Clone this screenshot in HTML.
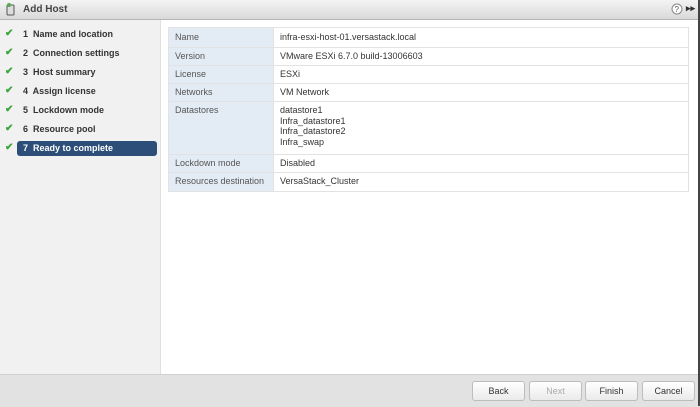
<!DOCTYPE html>
<html><head><style>
body{margin:0;width:700px;height:406px;overflow:hidden;font-family:"Liberation Sans",sans-serif;font-size:9px;color:#333;background:#fff;position:relative}
.title{position:absolute;left:0;top:0;width:700px;height:19px;background:linear-gradient(#f4f4f4,#d9d9d9);border-bottom:1px solid #b5b5b5}
.title span{position:absolute;left:23px;top:4px;font-size:10px;font-weight:bold;color:#444}
.left{position:absolute;left:0;top:20px;width:160px;height:354px;background:#f1f1f1;border-right:1px solid #e0e0e0}
.step{position:absolute;left:0;height:15px;width:160px;font-weight:bold;font-size:9px;color:#333}
.step .ck{position:absolute;left:5px;top:1px;color:#3aa53a;font-size:10px}
.step .t{position:absolute;left:23px;top:2px}
.sel .hl{position:absolute;left:17px;top:0;width:140px;height:15px;background:#2c4e78;border-radius:3px}
.sel .t{color:#fff}
table{position:absolute;left:168px;top:27px;width:521px;border-collapse:collapse}
td{border:1px solid #e2e2e2;padding:3px 6px 3px 6px;vertical-align:top;line-height:10px;height:11px}
td.l{background:#e3ecf5;color:#555;width:92px}
.foot{position:absolute;left:0;top:374px;width:700px;height:32px;background:#e2e2e2;border-top:1px solid #d0d0d0}
.btn{position:absolute;top:381px;height:18px;width:51px;border:1px solid #bdbdbd;border-radius:3px;background:linear-gradient(#fff,#eaeaea);text-align:center;line-height:18px;font-size:9px;color:#333}
.edge{position:absolute;left:698px;top:0;width:2px;height:406px;background:#444}
</style></head><body>
<div class="title">
<svg style="position:absolute;left:6px;top:3px" width="10" height="13"><rect x="1" y="2" width="7" height="10" rx="1" fill="#ddd" stroke="#555"/><circle cx="3" cy="2" r="2" fill="#5a5"/></svg>
<span>Add Host</span>
<svg style="position:absolute;left:671px;top:3px" width="12" height="12"><circle cx="6" cy="6" r="5" fill="#fff" stroke="#888"/><text x="3.5" y="9" font-size="8" font-family="Liberation Sans" fill="#555">?</text></svg>
<span style="left:686px;top:3px;font-size:9px;color:#333">▸▸</span>
</div>
<div class="left">
<div class="step" style="top:7px"><span class="ck">✔</span><span class="t">1&nbsp; Name and location</span></div>
<div class="step" style="top:26px"><span class="ck">✔</span><span class="t">2&nbsp; Connection settings</span></div>
<div class="step" style="top:45px"><span class="ck">✔</span><span class="t">3&nbsp; Host summary</span></div>
<div class="step" style="top:64px"><span class="ck">✔</span><span class="t">4&nbsp; Assign license</span></div>
<div class="step" style="top:83px"><span class="ck">✔</span><span class="t">5&nbsp; Lockdown mode</span></div>
<div class="step" style="top:102px"><span class="ck">✔</span><span class="t">6&nbsp; Resource pool</span></div>
<div class="step sel" style="top:121px"><span class="ck">✔</span><div class="hl"></div><span class="t">7&nbsp; Ready to complete</span></div>
</div>
<table>
<tr><td class="l" style="height:12px;padding-top:4px">Name</td><td style="padding-top:4px">infra-esxi-host-01.versastack.local</td></tr>
<tr><td class="l">Version</td><td>VMware ESXi 6.7.0 build-13006603</td></tr>
<tr><td class="l">License</td><td>ESXi</td></tr>
<tr><td class="l">Networks</td><td>VM Network</td></tr>
<tr><td class="l" style="height:46px">Datastores</td><td style="line-height:10.5px">datastore1<br>Infra_datastore1<br>Infra_datastore2<br>Infra_swap</td></tr>
<tr><td class="l">Lockdown mode</td><td>Disabled</td></tr>
<tr><td class="l" style="height:12px">Resources destination</td><td>VersaStack_Cluster</td></tr>
</table>
<div class="foot"></div>
<div class="btn" style="left:472px">Back</div>
<div class="btn" style="left:529px;color:#aaa">Next</div>
<div class="btn" style="left:585px">Finish</div>
<div class="btn" style="left:642px">Cancel</div>
<div class="edge"></div>
</body></html>
